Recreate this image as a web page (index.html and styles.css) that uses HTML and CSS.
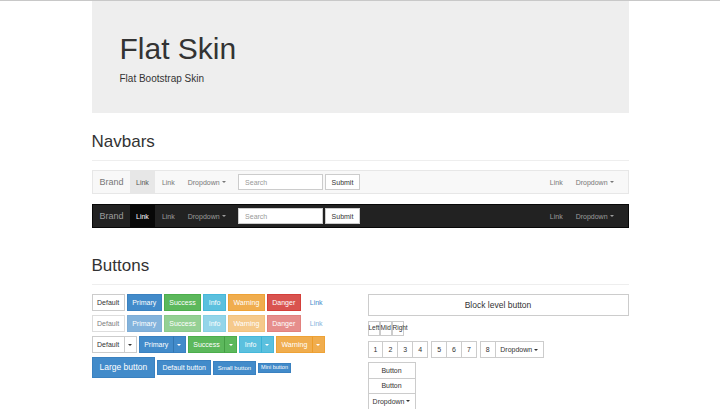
FILE: index.html
```html
<!DOCTYPE html>
<html lang="en">
<head>
<meta charset="utf-8">
<title>Flat Skin</title>
<link rel="stylesheet" href="styles.css">
</head>
<body>
<div class="container">
  <header class="jumbotron">
    <h1>Flat Skin</h1>
    <p>Flat Bootstrap Skin</p>
  </header>

  <section class="section-navbars">
    <div class="page-header"><h2>Navbars</h2></div>

    <nav class="navbar navbar-default">
      <a class="brand">Brand</a>
      <ul class="nav">
        <li class="active"><a>Link</a></li>
        <li><a>Link</a></li>
        <li><a>Dropdown <span class="caret"></span></a></li>
      </ul>
      <form class="navbar-form">
        <input class="form-control" type="text" placeholder="Search">
        <button class="btn btn-default btn-submit" type="button">Submit</button>
      </form>
      <ul class="nav nav-right">
        <li><a>Link</a></li>
        <li><a>Dropdown <span class="caret"></span></a></li>
      </ul>
    </nav>

    <nav class="navbar navbar-inverse">
      <a class="brand">Brand</a>
      <ul class="nav">
        <li class="active"><a>Link</a></li>
        <li><a>Link</a></li>
        <li><a>Dropdown <span class="caret"></span></a></li>
      </ul>
      <form class="navbar-form">
        <input class="form-control" type="text" placeholder="Search">
        <button class="btn btn-default btn-submit" type="button">Submit</button>
      </form>
      <ul class="nav nav-right">
        <li><a>Link</a></li>
        <li><a>Dropdown <span class="caret"></span></a></li>
      </ul>
    </nav>
  </section>

  <section class="section-buttons">
    <div class="page-header"><h2>Buttons</h2></div>

    <div class="row">
      <div class="col col-left">
        <div class="btn-row">
          <button class="btn btn-default">Default</button>
          <button class="btn btn-primary">Primary</button>
          <button class="btn btn-success">Success</button>
          <button class="btn btn-info">Info</button>
          <button class="btn btn-warning">Warning</button>
          <button class="btn btn-danger">Danger</button>
          <button class="btn btn-link">Link</button>
        </div>
        <div class="btn-row disabled">
          <button class="btn btn-default">Default</button>
          <button class="btn btn-primary">Primary</button>
          <button class="btn btn-success">Success</button>
          <button class="btn btn-info">Info</button>
          <button class="btn btn-warning">Warning</button>
          <button class="btn btn-danger">Danger</button>
          <button class="btn btn-link">Link</button>
        </div>
        <div class="btn-row">
          <div class="btn-group">
            <button class="btn btn-default">Default</button>
            <button class="btn btn-default dropdown-toggle"><span class="caret"></span></button>
          </div>
          <div class="btn-group">
            <button class="btn btn-primary">Primary</button>
            <button class="btn btn-primary dropdown-toggle"><span class="caret"></span></button>
          </div>
          <div class="btn-group">
            <button class="btn btn-success">Success</button>
            <button class="btn btn-success dropdown-toggle"><span class="caret"></span></button>
          </div>
          <div class="btn-group">
            <button class="btn btn-info">Info</button>
            <button class="btn btn-info dropdown-toggle"><span class="caret"></span></button>
          </div>
          <div class="btn-group">
            <button class="btn btn-warning">Warning</button>
            <button class="btn btn-warning dropdown-toggle"><span class="caret"></span></button>
          </div>
        </div>
        <div class="btn-row sizes">
          <button class="btn btn-primary btn-lg">Large button</button>
          <button class="btn btn-primary btn-md">Default button</button>
          <button class="btn btn-primary btn-sm">Small button</button>
          <button class="btn btn-primary btn-xs">Mini button</button>
        </div>
      </div>

      <div class="col col-right">
        <button class="btn btn-default btn-block">Block level button</button>
        <div class="btn-group lmr">
          <button class="btn btn-default">Left</button>
          <button class="btn btn-default">Mid</button>
          <button class="btn btn-default">Right</button>
        </div>
        <div class="btn-toolbar">
          <div class="btn-group">
            <button class="btn btn-default btn-num">1</button>
            <button class="btn btn-default btn-num">2</button>
            <button class="btn btn-default btn-num">3</button>
            <button class="btn btn-default btn-num">4</button>
          </div>
          <div class="btn-group">
            <button class="btn btn-default btn-num">5</button>
            <button class="btn btn-default btn-num">6</button>
            <button class="btn btn-default btn-num">7</button>
          </div>
          <div class="btn-group">
            <button class="btn btn-default btn-num">8</button>
            <button class="btn btn-default">Dropdown <span class="caret"></span></button>
          </div>
        </div>
        <div class="btn-group-vertical">
          <button class="btn btn-default">Button</button>
          <button class="btn btn-default">Button</button>
          <button class="btn btn-default">Dropdown <span class="caret"></span></button>
        </div>
      </div>
    </div>
  </section>
</div>
</body>
</html>
```

FILE: styles.css
```css
* { box-sizing: border-box; }

html { overflow: hidden; }

body {
  margin: 0;
  border-top: 1px solid #c8c8c8;
  background: #fff;
  color: #333;
  font-family: "Liberation Sans", Arial, sans-serif;
}

.container {
  width: 537px;
  margin: 0 auto;
}

/* Jumbotron */
.jumbotron {
  background: #eeeeee;
  padding: 30px 28px 27px;
}
.jumbotron h1 {
  margin: 0;
  font-size: 30px;
  line-height: 36px;
  font-weight: normal;
  color: #333;
}
.jumbotron p {
  margin: 4px 0 0;
  font-size: 10px;
  line-height: 15px;
}

/* Page headers */
.page-header {
  border-bottom: 1px solid #eeeeee;
  padding-bottom: 8px;
}
.page-header h2 {
  margin: 0;
  font-size: 17px;
  line-height: 20px;
  font-weight: normal;
  color: #333;
}
.section-navbars .page-header { margin-top: 19px; }
.section-buttons .page-header { margin-top: 28px; }

/* Navbars */
.navbar {
  display: flex;
  align-items: stretch;
  height: 24px;
  border: 1px solid;
  margin-top: 9px;
}
.navbar + .navbar { margin-top: 10px; }

.brand {
  display: flex;
  align-items: center;
  padding: 0 6px 0 7px;
  font-size: 9px;
}
.nav {
  display: flex;
  list-style: none;
  margin: 0;
  padding: 0;
}
.nav li { display: flex; }
.nav a {
  display: flex;
  align-items: center;
  padding: 0 6.5px;
  font-size: 7px;
  white-space: pre;
}
.nav .caret { margin-left: 0; }
.nav-right {
  margin-left: auto;
  padding-right: 7.5px;
}
.navbar-form {
  display: flex;
  align-items: center;
  margin: 0;
  padding: 0 0 0 6px;
}
.form-control {
  width: 85px;
  height: 16px;
  border: 1px solid #cccccc;
  background: #fff;
  padding: 0 6px;
  font-family: inherit;
  font-size: 7px;
  color: #555;
  outline: none;
}
.form-control::placeholder { color: #999; }

.navbar-default {
  background: #f8f8f8;
  border-color: #e7e7e7;
}
.navbar-default .brand,
.navbar-default .nav a { color: #777; }
.navbar-default .nav .active a { background: #e7e7e7; color: #555; }

.navbar-inverse {
  background: #222222;
  border-color: #080808;
}
.navbar-inverse .brand,
.navbar-inverse .nav a { color: #9d9d9d; }
.navbar-inverse .nav .active a { background: #080808; color: #fff; }

.caret {
  display: inline-block;
  width: 0;
  height: 0;
  margin-left: 0;
  vertical-align: middle;
  border-top: 2px solid;
  border-left: 2px solid transparent;
  border-right: 2px solid transparent;
}

/* Buttons */
.btn {
  display: inline-flex;
  align-items: center;
  justify-content: center;
  height: 17px;
  padding: 0 4.5px;
  margin: 0;
  border: 1px solid transparent;
  border-radius: 0;
  font-family: inherit;
  font-size: 7px;
  line-height: 1;
  white-space: pre;
  cursor: pointer;
}
.btn-submit { height: 16px; margin-left: 2px; padding: 0 5.5px; }

.btn-default { background: #fff; border-color: #cccccc; color: #333; }
.btn-primary { background: #428bca; border-color: #3a81c0; color: #fff; }
.btn-success { background: #5cb85c; border-color: #4cae4c; color: #fff; }
.btn-info    { background: #5bc0de; border-color: #46b8da; color: #fff; }
.btn-warning { background: #f0ad4e; border-color: #eea236; color: #fff; }
.btn-danger  { background: #d9534f; border-color: #d43f3a; color: #fff; }
.btn-link    { background: transparent; border-color: transparent; color: #428bca; padding: 0 6px; }

.row {
  display: grid;
  grid-template-columns: 1fr 1fr;
  column-gap: 15px;
  margin-top: 9px;
}
.col-left {
  display: flex;
  flex-direction: column;
  gap: 4px;
}
.btn-row {
  display: flex;
  align-items: center;
  gap: 2px;
}
.btn-row.disabled .btn { opacity: 0.65; }

.btn-group { display: flex; }
.btn-group .btn + .btn { margin-left: -1px; }
.dropdown-toggle { padding: 0 3.5px; }
.btn-primary.dropdown-toggle { border-left-color: #3276b1; }
.btn-success.dropdown-toggle { border-left-color: #449d44; }
.btn-info.dropdown-toggle    { border-left-color: #39b3d7; }
.btn-warning.dropdown-toggle { border-left-color: #ed9c28; }

.btn-lg { height: 21px; padding: 0 7px; font-size: 8.5px; }
.btn-md { height: 15px; padding: 0 4.2px; }
.btn-sm { height: 14px; padding: 0 3.5px; font-size: 6px; }
.btn-xs { height: 10px; padding: 0 2.5px; font-size: 5.5px; }

.col-right {
  display: flex;
  flex-direction: column;
  align-items: flex-start;
  gap: 5px;
}
.btn-block {
  align-self: stretch;
  height: 22px;
  font-size: 8.5px;
}
.lmr .btn {
  width: 12px;
  height: 15px;
  padding: 0;
  justify-content: flex-start;
  font-size: 6.5px;
  overflow: visible;
}
.lmr .btn + .btn { margin-left: 0; }

.btn-toolbar {
  display: flex;
  gap: 3px;
}
.btn-num { padding: 0 5px; }

.btn-group-vertical {
  display: flex;
  flex-direction: column;
  width: 48px;
  margin-top: -1px;
}
.btn-group-vertical .btn { width: 100%; height: 16.5px; }
.btn-group-vertical .btn + .btn { margin-top: -1px; }
```
